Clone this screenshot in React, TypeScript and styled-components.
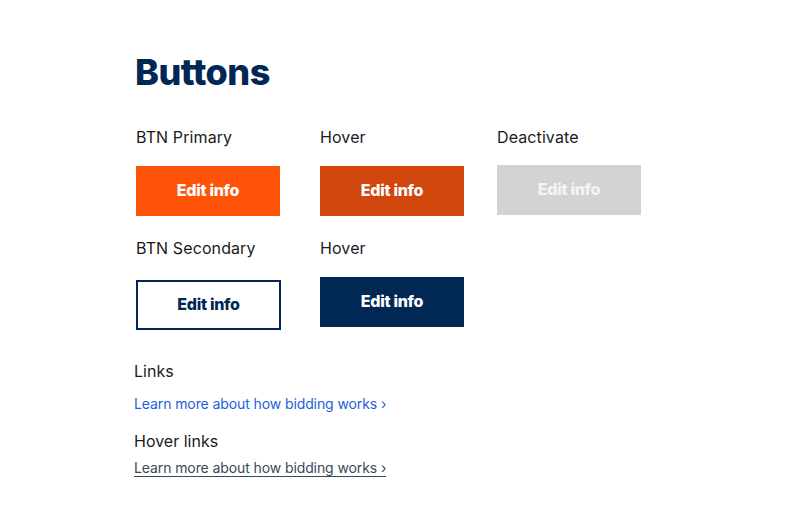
import React from 'react';
import styled, { createGlobalStyle, css } from 'styled-components';

const GlobalStyle = createGlobalStyle`
  body {
    margin: 0;
    background: #ffffff;
    font-family: Inter, "Noto Sans", Arial, sans-serif;
    color: #1b1b1b;
  }
`;

type Variant = 'primary' | 'primaryHover' | 'disabled' | 'secondary' | 'secondaryHover';

const App = () => {
  return (
    <>
      <GlobalStyle />
      <Page>
        <Title>Buttons</Title>
        <Grid>
          <Cell>
            <Label>BTN Primary</Label>
            <Button $variant="primary">Edit info</Button>
          </Cell>
          <Cell>
            <Label>Hover</Label>
            <Button $variant="primaryHover">Edit info</Button>
          </Cell>
          <Cell>
            <Label>Deactivate</Label>
            <Button $variant="disabled" $shift={-1} disabled>
              Edit info
            </Button>
          </Cell>
        </Grid>
        <Grid $top={22}>
          <Cell>
            <Label>BTN Secondary</Label>
            <Button $variant="secondary" $shift={3}>
              Edit info
            </Button>
          </Cell>
          <Cell>
            <Label>Hover</Label>
            <Button $variant="secondaryHover">Edit info</Button>
          </Cell>
        </Grid>
        <LinkSection>
          <SectionLabel>Links</SectionLabel>
          <TextLink href="#">Learn more about how bidding works ›</TextLink>
          <SectionLabel $top={17}>Hover links</SectionLabel>
          <TextLink href="#" $hover $top={7}>
            Learn more about how bidding works ›
          </TextLink>
        </LinkSection>
      </Page>
    </>
  );
};

const Page = styled.main`
  padding: 50px 0 0 136px;
`;

const Title = styled.h1`
  margin: 0 0 0 -1px;
  font-size: 36px;
  line-height: 44px;
  font-weight: 800;
  letter-spacing: -0.5px;
  color: #012754;
`;

const Grid = styled.div<{ $top?: number }>`
  display: grid;
  grid-template-columns: 184px 177px 144px;
  margin-top: ${({ $top }) => $top ?? 33}px;
`;

const Cell = styled.div`
  display: flex;
  flex-direction: column;
  align-items: flex-start;
`;

const Label = styled.div`
  font-size: 16px;
  line-height: 20px;
  letter-spacing: 0.1px;
  color: #1b1b1b;
  margin-bottom: 19px;
`;

const variants = {
  primary: css`
    background: #ff530a;
    color: #ffffff;
  `,
  primaryHover: css`
    background: #d1460c;
    color: #ffffff;
  `,
  disabled: css`
    background: #d3d3d3;
    color: #f4f4f4;
  `,
  secondary: css`
    width: 145px;
    background: #ffffff;
    color: #012754;
    border: 2px solid #012754;
  `,
  secondaryHover: css`
    background: #012754;
    color: #ffffff;
  `,
};

const Button = styled.button<{ $variant: Variant; $shift?: number }>`
  width: 144px;
  height: 50px;
  margin-top: ${({ $shift }) => $shift ?? 0}px;
  padding: 0 0 2px;
  border: none;
  font-family: Inter, "Noto Sans", Arial, sans-serif;
  font-size: 16px;
  font-weight: 800;
  letter-spacing: -0.3px;
  box-sizing: border-box;
  ${({ $variant }) => variants[$variant]}
`;

const LinkSection = styled.section`
  display: flex;
  flex-direction: column;
  align-items: flex-start;
  margin: 31px 0 0 -2px;
`;

const SectionLabel = styled.div<{ $top?: number }>`
  margin-top: ${({ $top }) => $top ?? 0}px;
  font-size: 16px;
  line-height: 20px;
  color: #1b1b1b;
`;

const TextLink = styled.a<{ $hover?: boolean; $top?: number }>`
  margin-top: ${({ $top }) => $top ?? 13}px;
  font-size: 14px;
  line-height: 20px;
  letter-spacing: -0.1px;
  color: #1c5fd9;
  text-decoration: none;

  ${({ $hover }) =>
    $hover &&
    css`
      color: #3a4859;
      text-decoration: underline;
      text-underline-offset: 3px;
    `}
`;

export default App;
